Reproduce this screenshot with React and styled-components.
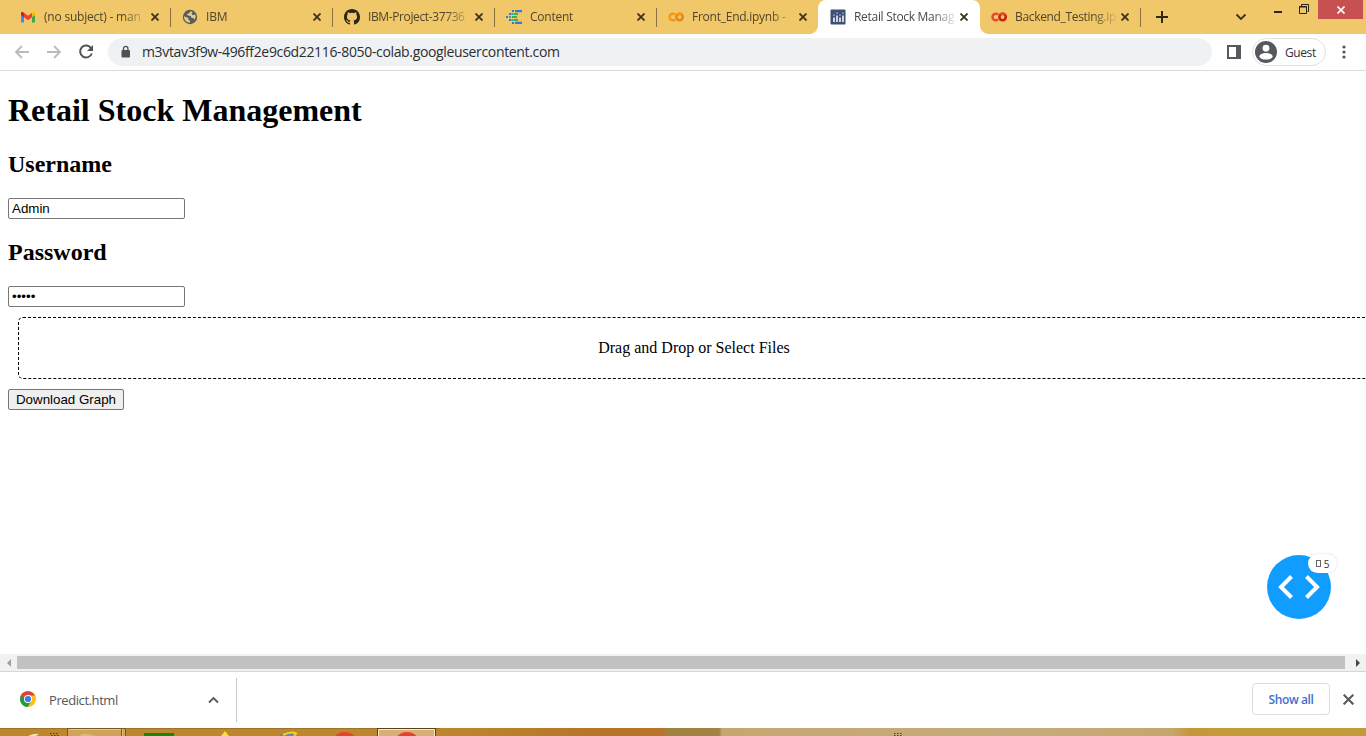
import React from 'react';
import styled, { createGlobalStyle } from 'styled-components';

const GlobalStyle = createGlobalStyle`
  html, body { margin: 0; padding: 0; overflow: hidden; background: #fff; }
  svg { display: block; flex: none; }
`;

const Window = styled.div`
  width: 1366px;
  height: 736px;
  display: flex;
  flex-direction: column;
  overflow: hidden;
  background: #fff;
  font-family: 'Open Sans', 'Noto Sans', sans-serif;
`;

/* ---------- Tab strip ---------- */
const TabStrip = styled.div`
  height: 34px;
  flex: none;
  display: flex;
  background: #f0c769;
  padding-left: 8px;
`;

const TabBox = styled.div`
  box-sizing: border-box;
  position: relative;
  width: ${(p) => p.$width || 162}px;
  height: 34px;
  flex: none;
  display: flex;
  align-items: center;
  justify-content: space-between;
  padding: 0 ${(p) => (p.$active ? 12 : 11)}px 0 ${(p) => (p.$width ? 11 : 12)}px;
  background: ${(p) => (p.$active ? '#fff' : 'transparent')};
  border-radius: ${(p) => (p.$active ? '8px 8px 0 0' : '0')};
  ${(p) =>
    p.$active &&
    `
    &::before, &::after {
      content: '';
      position: absolute;
      bottom: 0;
      width: 8px;
      height: 8px;
    }
    &::before { left: -8px; background: radial-gradient(circle at 0 0, transparent 7.5px, #fff 8px); }
    &::after { right: -8px; background: radial-gradient(circle at 100% 0, transparent 7.5px, #fff 8px); }
  `}
  ${(p) =>
    p.$divider &&
    `
    &::after {
      content: '';
      position: absolute;
      right: -1px;
      top: 8px;
      width: 1px;
      height: 19px;
      background: #88713f;
    }
  `}
`;

const TabLabel = styled.div`
  display: flex;
  align-items: center;
  gap: 8px;
`;

const TabTitle = styled.div`
  font-size: 12px;
  line-height: 18px;
  letter-spacing: ${(p) => p.$track}px;
  color: ${(p) => (p.$active ? '#454749' : '#51452b')};
  white-space: nowrap;
  mask-image: linear-gradient(90deg, #000 78px, transparent 104px);
`;

const Grow = styled.div`
  flex: 1;
`;

const NewTab = styled.div`
  width: 44px;
  display: flex;
  align-items: center;
  justify-content: center;
`;

const WindowControls = styled.div`
  display: flex;
  align-items: flex-start;
`;

const TabSearch = styled.div`
  height: 34px;
  display: flex;
  align-items: center;
  margin-right: 27px;
`;

const Minimize = styled.div`
  width: 8px;
  height: 2px;
  margin: 11px 17px 0 0;
  background: #2b2415;
`;

const Restore = styled.div`
  margin: 4px 8px 0 0;
`;

const CloseWindow = styled.div`
  width: 45px;
  height: 19px;
  margin-right: 3px;
  display: flex;
  align-items: center;
  justify-content: center;
  background: #c75050;
`;

/* ---------- Toolbar ---------- */
const Toolbar = styled.div`
  box-sizing: border-box;
  height: 37px;
  flex: none;
  display: flex;
  align-items: center;
  padding: 0 12px 0 14px;
  border-bottom: 1px solid #dadbdd;
  background: #fff;
`;

const NavButtons = styled.div`
  display: flex;
  gap: 16px;
  width: 94px;
`;

const AddressBar = styled.div`
  box-sizing: border-box;
  width: 1104px;
  height: 28px;
  display: flex;
  align-items: center;
  gap: 11px;
  padding-left: 12px;
  border-radius: 14px;
  background: #f0f1f3;
`;

const Url = styled.div`
  font-size: 14px;
  line-height: 20px;
  letter-spacing: -0.345px;
  color: #2b2e32;
  white-space: nowrap;
`;

const SidePanel = styled.div`
  margin: 0 11px 0 15px;
`;

const Profile = styled.div`
  box-sizing: border-box;
  width: 74px;
  height: 28px;
  display: flex;
  align-items: center;
  gap: 8px;
  padding-left: 2px;
  border: 1px solid #e2e0e3;
  border-radius: 14px;
  font-size: 12px;
  color: #303236;
  letter-spacing: -0.4px;
  margin-right: 16px;
`;

/* ---------- Page ---------- */
const Page = styled.main`
  box-sizing: border-box;
  position: relative;
  height: 583px;
  flex: none;
  padding: 0 8px;
  overflow: hidden;
  font-family: 'Liberation Serif', 'Times New Roman', serif;
  font-size: 16px;
  color: #000;
`;

const Title = styled.h1`
  margin: 21px 0;
  font-size: 32px;
  line-height: 37px;
`;

const FieldLabel = styled.h2`
  margin: 19px 0 20px;
  font-size: 24px;
  line-height: 28px;
`;

const Field = styled.input`
  display: block;
  box-sizing: border-box;
  width: 177px;
  height: 21px;
  margin: 0;
  padding: 1px 3px;
  border: 1px solid #767676;
  border-radius: 2px;
  outline: none;
  background: #fff;
  color: #000;
  font: 13.333px 'Liberation Sans', Arial, sans-serif;
`;

const UploadArea = styled.div`
  width: 100%;
  height: 60px;
  margin: 10px;
  line-height: 60px;
  text-align: center;
  border: 1px dashed #000;
  border-radius: 5px;
`;

const DownloadButton = styled.button`
  display: block;
  box-sizing: border-box;
  width: 116px;
  height: 21px;
  padding: 0;
  border: 1px solid #767676;
  border-radius: 2px;
  background: #efefef;
  color: #000;
  white-space: nowrap;
  font: 13.333px 'Liberation Sans', Arial, sans-serif;
`;

const DebugButton = styled.div`
  position: absolute;
  right: 35px;
  bottom: 35px;
  width: 64px;
  height: 64px;
  display: flex;
  align-items: center;
  justify-content: center;
  border-radius: 50%;
  background: #119dff;
`;

const ErrorBadge = styled.div`
  position: absolute;
  right: -6px;
  top: -1px;
  width: 29px;
  height: 19px;
  display: flex;
  align-items: center;
  justify-content: center;
  gap: 3px;
  border-radius: 10px;
  background: #fff;
  box-shadow: 0 0 2px rgba(80, 120, 200, 0.35);
  font-family: 'Open Sans', sans-serif;
  font-size: 10px;
  color: #333;
`;

const MissingGlyph = styled.i`
  box-sizing: border-box;
  width: 5px;
  height: 7px;
  border: 1px solid #666;
`;

/* ---------- Scrollbar ---------- */
const Scrollbar = styled.div`
  height: 17px;
  flex: none;
  display: flex;
  align-items: center;
  background: #f1f1f1;
`;

const ScrollArrow = styled.div`
  width: 17px;
  display: flex;
  justify-content: center;
`;

const ScrollThumb = styled.div`
  width: 1328px;
  margin-right: 4px;
  height: 13px;
  background: #c1c1c1;
`;

/* ---------- Download shelf ---------- */
const Shelf = styled.div`
  box-sizing: border-box;
  height: 57px;
  flex: none;
  display: flex;
  align-items: center;
  border-top: 1px solid #d5d6d8;
  padding: 0 12px 0 20px;
`;

const DownloadItem = styled.div`
  box-sizing: border-box;
  width: 217px;
  height: 44px;
  display: flex;
  align-items: center;
  justify-content: space-between;
  padding-right: 17px;
  border-right: 1px solid #c6c8cb;
`;

const FileIcon = styled.div`
  padding-bottom: 2px;
`;

const FileName = styled.div`
  display: flex;
  align-items: center;
  gap: 13px;
  font-size: 13px;
  letter-spacing: -0.42px;
  color: #55585c;
`;

const ShelfActions = styled.div`
  display: flex;
  align-items: center;
  gap: 13px;
  padding-bottom: 2px;
`;

const ShowAll = styled.div`
  box-sizing: border-box;
  width: 78px;
  height: 32px;
  display: flex;
  align-items: center;
  justify-content: center;
  border: 1px solid #dadce0;
  border-radius: 4px;
  font-size: 12px;
  font-weight: 600;
  letter-spacing: -0.4px;
  color: #3f6fce;
`;

/* ---------- Taskbar ---------- */
const Taskbar = styled.div`
  height: 8px;
  flex: none;
  overflow: hidden;
  background: linear-gradient(90deg, #bd872d 0, #bd872d 440px, #b67428 600px, #b87429 662px, #a08240 668px, #a38344 719px, #c4a770 722px, #c6ab7c 1020px, #c5a66c 1172px, #c6963a 1190px, #c39a3a 1220px, #c19b3b 1366px);
`;

const tabs = [
  { title: '(no subject) - man', icon: 'gmail', divider: true, track: -0.2 },
  { title: 'IBM', icon: 'globe', divider: true, track: -0.2 },
  { title: 'IBM-Project-37736', icon: 'github', divider: true, track: -0.38 },
  { title: 'Content', icon: 'content', divider: true, track: -0.25 },
  { title: 'Front_End.ipynb -', icon: 'colab', track: -0.25 },
  { title: 'Retail Stock Manag', icon: 'plotly', active: true, track: -0.3 },
  { title: 'Backend_Testing.ip', icon: 'colabRed', divider: true, track: -0.33, width: 160 },
];

const ColabMark = ({ a, b }) => (
  <svg width="16" height="16" viewBox="0 0 16 16" fill="none" strokeWidth="2.500">
    <path d="M7.200 5.700A3.300 3.300 0 1 0 7.200 10.300" stroke={a} />
    <circle cx="11.600" cy="8" r="3.200" stroke={b} />
    <path d="M9.300 5.800A3.200 3.200 0 0 1 13.900 5.800" stroke={a} />
  </svg>
);

const favicons = {
  gmail: (
    <svg width="16" height="16" viewBox="0 0 16 16">
      <path d="M1 4v8.500q0 1 1 1h2V7z" fill="#4285f4" />
      <path d="M15 4v8.500q0 1-1 1h-2V7z" fill="#34a853" />
      <path d="M12 4.200 13 3q2-.6 2 1.200V6l-3 2.300z" fill="#fbbc04" />
      <path d="M1 6V4.200Q1 2.400 3 3l1 1.200v4.100z" fill="#c5221f" />
      <path d="M4 8.300V3.800l4 3 4-3v4.500l-4 3z" fill="#ea4335" />
    </svg>
  ),
  globe: (
    <svg width="16" height="16" viewBox="0 0 16 16">
      <circle cx="8" cy="8" r="7.200" fill="#575c60" />
      <path d="M2 7.200 6.300 9v1.500L8 12v1.700Q3 13.300 2 8.500zM8.500 2.300 7 4.500H5.300v1.700L8.700 7l1 2h1.800l1 2q2-3 .8-5.500L11 6.200 9.500 5l1.200-2z" fill="#e9cb85" />
    </svg>
  ),
  github: (
    <svg width="16" height="16" viewBox="0 0 16 16">
      <path fill="#2c2619" d="M8 0C3.580 0 0 3.580 0 8c0 3.540 2.290 6.530 5.470 7.590.4.07.55-.17.55-.38 0-.19-.01-.82-.01-1.490-2.010.37-2.530-.49-2.690-.94-.09-.23-.48-.94-.82-1.130-.28-.15-.68-.52-.01-.53.63-.01 1.080.58 1.230.82.72 1.210 1.870.87 2.330.66.07-.52.28-.87.51-1.070-1.780-.2-3.640-.89-3.640-3.950 0-.87.31-1.590.82-2.150-.08-.2-.36-1.020.08-2.120 0 0 .67-.21 2.200.82.64-.18 1.320-.27 2-.27s1.360.09 2 .27c1.530-1.040 2.200-.82 2.200-.82.44 1.100.16 1.920.08 2.120.51.56.82 1.270.82 2.150 0 3.070-1.870 3.750-3.650 3.950.29.25.54.73.54 1.480 0 1.070-.01 1.930-.01 2.200 0 .21.15.46.55.38A8.010 8.010 0 0 0 16 8c0-4.420-3.580-8-8-8z" />
    </svg>
  ),
  content: (
    <svg width="16" height="16" viewBox="0 0 16 16">
      <g fill="#3579d5">
        <path d="M9 1h7v2.200H9zM9 12.800h7V15H9zM6 1h2v2H6zM6 13h2v2H6zM0 6.900h2v2.200H0zM3 4h2v2H3zM3 10h2v2H3z" />
      </g>
      <g fill="#38b34a">
        <path d="M8 4h4v2H8zM6 6.900h5v2.200H6zM8 10h4v2H8z" />
      </g>
      <path d="M5.500 4h2v2h-2zM3 6.900h2v2.200H3zM5.500 10h2v2h-2z" fill="#25a6b5" />
    </svg>
  ),
  colab: <ColabMark a="#f09a18" b="#ee8412" />,
  colabRed: <ColabMark a="#ea4a2c" b="#c9200f" />,
  plotly: (
    <svg width="16" height="16" viewBox="0 0 16 16">
      <rect x=".5" y=".5" width="15" height="15" rx="1" fill="#3f4f75" />
      <path d="M4 8.500V13M7 6.500V13M10 8.500V13M13 6.500V13" stroke="#fff" strokeWidth="1.500" />
      <path d="M4 5.500v1.300M7 3.500v1.300M10 5.500v1.300M13 3.500v1.300" stroke="#aebfe0" strokeWidth="1.500" />
    </svg>
  ),
};

const Cross = ({ size = 8, color = '#3a301b', width = 1.8 }) => (
  <svg width={size} height={size} viewBox="0 0 8 8" stroke={color} strokeWidth={width}>
    <path d="M.5.5l7 7M7.500.5l-7 7" />
  </svg>
);

const Tab = ({ title, icon, active, divider, track, width }) => (
  <TabBox $active={active} $divider={divider} $width={width}>
    <TabLabel>
      {favicons[icon]}
      <TabTitle $active={active} $track={track}>{title}</TabTitle>
    </TabLabel>
    <Cross size={8} />
  </TabBox>
);

const ChromeLogo = () => (
  <svg width="16" height="16" viewBox="0 0 16 16">
    <circle cx="8" cy="8" r="8" fill="#fbc116" />
    <path d="M8 8 1.070 4A8 8 0 0 0 7.500 16l4-6z" fill="#1e9b4d" />
    <path d="M8 8H4.500L1.070 4A8 8 0 0 1 14.930 4.500H8z" fill="#dc4437" />
    <circle cx="8" cy="8" r="4" fill="#fff" />
    <circle cx="8" cy="8" r="3.100" fill="#3b7ded" />
  </svg>
);

const TaskbarIcons = () => (
  <svg width="1366" height="8" viewBox="0 0 1366 8">
    <path d="M0 .5h440" stroke="#a17029" />
    <path d="M28 8q6-3 11-2l-3 2z" fill="#f3dfb0" />
    <path d="M50 5.500h9M51 7.500h8" stroke="#4b3b1d" strokeDasharray="1.500 1.500" />
    <rect x="67.500" y=".5" width="58" height="12" fill="#cfa35c" stroke="#7b5a24" />
    <path d="M69 1.500h52" stroke="#e6c88d" />
    <path d="M79 8q3-3 9-2l8 2z" fill="#dcb974" />
    <path d="M121.500 1v8" stroke="#7b5a24" />
    <path d="M122.500 1v8" stroke="#e1bd78" />
    <rect x="144" y="5" width="30" height="3" fill="#128a06" />
    <path d="M221 8l4-5 4 5z" fill="#f7e436" />
    <path d="M278 8q8-5 18-3l-2 3z" fill="#6b88a0" />
    <path d="M283 7q8-4 13-1.500l-2 2.500" stroke="#f6cf27" strokeWidth="2" fill="none" />
    <circle cx="345" cy="17.500" r="13.500" fill="#e5432e" />
    <rect x="377.500" y=".5" width="58" height="12" fill="#d8b077" stroke="#5d4015" />
    <path d="M378.500 8V1.500h56V8" stroke="#faedcf" fill="none" />
    <circle cx="407" cy="17.500" r="13.500" fill="#e5432e" />
    <path d="M894 5.500h8M894 7.500h8" stroke="#4b4026" strokeDasharray="1.500 1.500" />
  </svg>
);

export default function App() {
  return (
    <Window>
      <GlobalStyle />
      <TabStrip>
        {tabs.map((tab) => (
          <Tab key={tab.title} {...tab} />
        ))}
        <NewTab>
          <svg width="12" height="12" viewBox="0 0 12 12" stroke="#2f2818" strokeWidth="2">
            <path d="M6 0v12M0 6h12" />
          </svg>
        </NewTab>
        <Grow />
        <WindowControls>
          <TabSearch>
            <svg width="12" height="8" viewBox="0 0 12 8" fill="none" stroke="#3a301b" strokeWidth="1.800">
              <path d="M1.500 1.500 6 6l4.500-4.500" />
            </svg>
          </TabSearch>
          <Minimize />
          <Restore>
            <svg width="11" height="11" viewBox="0 0 11 11" fill="none" stroke="#2b2415">
              <path d="M2.500 2V.5h7v7H8.500" />
              <path d="M.5 2.500h7v7h-7z" />
              <path d="M0 3h8" />
            </svg>
          </Restore>
          <CloseWindow>
            <Cross size={8} color="#fff" width={1.6} />
          </CloseWindow>
        </WindowControls>
      </TabStrip>

      <Toolbar>
        <NavButtons>
          <svg width="16" height="16" viewBox="0 0 16 16" fill="none" stroke="#b9bbbe" strokeWidth="1.800">
            <path d="M15 8H2.500M8 2 2 8l6 6" />
          </svg>
          <svg width="16" height="16" viewBox="0 0 16 16" fill="none" stroke="#b9bbbe" strokeWidth="1.800">
            <path d="M1 8h12.500M8 2l6 6-6 6" />
          </svg>
          <svg width="16" height="16" viewBox="0 0 16 16" fill="none" stroke="#505357" strokeWidth="2">
            <path d="M13.200 4.300A6 6 0 1 0 13.800 9.500" />
            <path d="M15 1v6H9z" fill="#505357" stroke="none" />
          </svg>
        </NavButtons>
        <AddressBar>
          <svg width="11" height="14" viewBox="0 0 11 14">
            <rect x="1.500" y="5" width="8.500" height="7.500" rx="1" fill="#4e5155" />
            <path d="M3.500 5.500V3.500a2.200 2.200 0 0 1 4.400 0v2" fill="none" stroke="#4e5155" strokeWidth="1.300" />
          </svg>
          <Url>m3vtav3f9w-496ff2e9c6d22116-8050-colab.googleusercontent.com</Url>
        </AddressBar>
        <SidePanel>
          <svg width="14" height="14" viewBox="0 0 14 14">
            <path d="M1 1h12v12H1z" fill="none" stroke="#55585c" strokeWidth="2" />
            <path d="M9 0h5v14H9z" fill="#55585c" />
          </svg>
        </SidePanel>
        <Profile>
          <svg width="22" height="22" viewBox="0 0 22 22">
            <circle cx="11" cy="11" r="11" fill="#55585c" />
            <circle cx="11" cy="7.200" r="3.400" fill="#fff" />
            <ellipse cx="11" cy="15.300" rx="6.600" ry="3.300" fill="#fff" />
          </svg>
          Guest
        </Profile>
        <svg width="4" height="14" viewBox="0 0 4 14" fill="#505357">
          <circle cx="2" cy="2" r="1.600" />
          <circle cx="2" cy="7" r="1.600" />
          <circle cx="2" cy="12" r="1.600" />
        </svg>
      </Toolbar>

      <Page>
        <Title>Retail Stock Management</Title>
        <FieldLabel>Username</FieldLabel>
        <Field defaultValue="Admin" />
        <FieldLabel>Password</FieldLabel>
        <Field type="password" defaultValue="admin" />
        <UploadArea>Drag and Drop or Select Files</UploadArea>
        <DownloadButton>Download Graph</DownloadButton>
        <DebugButton>
          <svg width="42" height="26" viewBox="0 0 42 26" fill="none" stroke="#fff" strokeWidth="4">
            <path d="M13.500 2.500 3 13l10.500 10.500M28.500 2.500 39 13 28.500 23.500" />
          </svg>
          <ErrorBadge>
            <MissingGlyph />5
          </ErrorBadge>
        </DebugButton>
      </Page>

      <Scrollbar>
        <ScrollArrow>
          <svg width="4" height="8" viewBox="0 0 4 8">
            <path d="M4 0v8L0 4z" fill="#a0a0a0" />
          </svg>
        </ScrollArrow>
        <ScrollThumb />
        <ScrollArrow>
          <svg width="4" height="8" viewBox="0 0 4 8">
            <path d="M0 0v8l4-4z" fill="#464646" />
          </svg>
        </ScrollArrow>
      </Scrollbar>

      <Shelf>
        <DownloadItem>
          <FileName>
            <FileIcon>
              <ChromeLogo />
            </FileIcon>
            Predict.html
          </FileName>
          <svg width="11" height="8" viewBox="0 0 11 8" fill="none" stroke="#55585c" strokeWidth="1.800">
            <path d="M1 6.500 5.500 2 10 6.500" />
          </svg>
        </DownloadItem>
        <Grow />
        <ShelfActions>
          <ShowAll>Show all</ShowAll>
          <Cross size={11} color="#55585c" width={1.5} />
        </ShelfActions>
      </Shelf>

      <Taskbar>
        <TaskbarIcons />
      </Taskbar>
    </Window>
  );
}
